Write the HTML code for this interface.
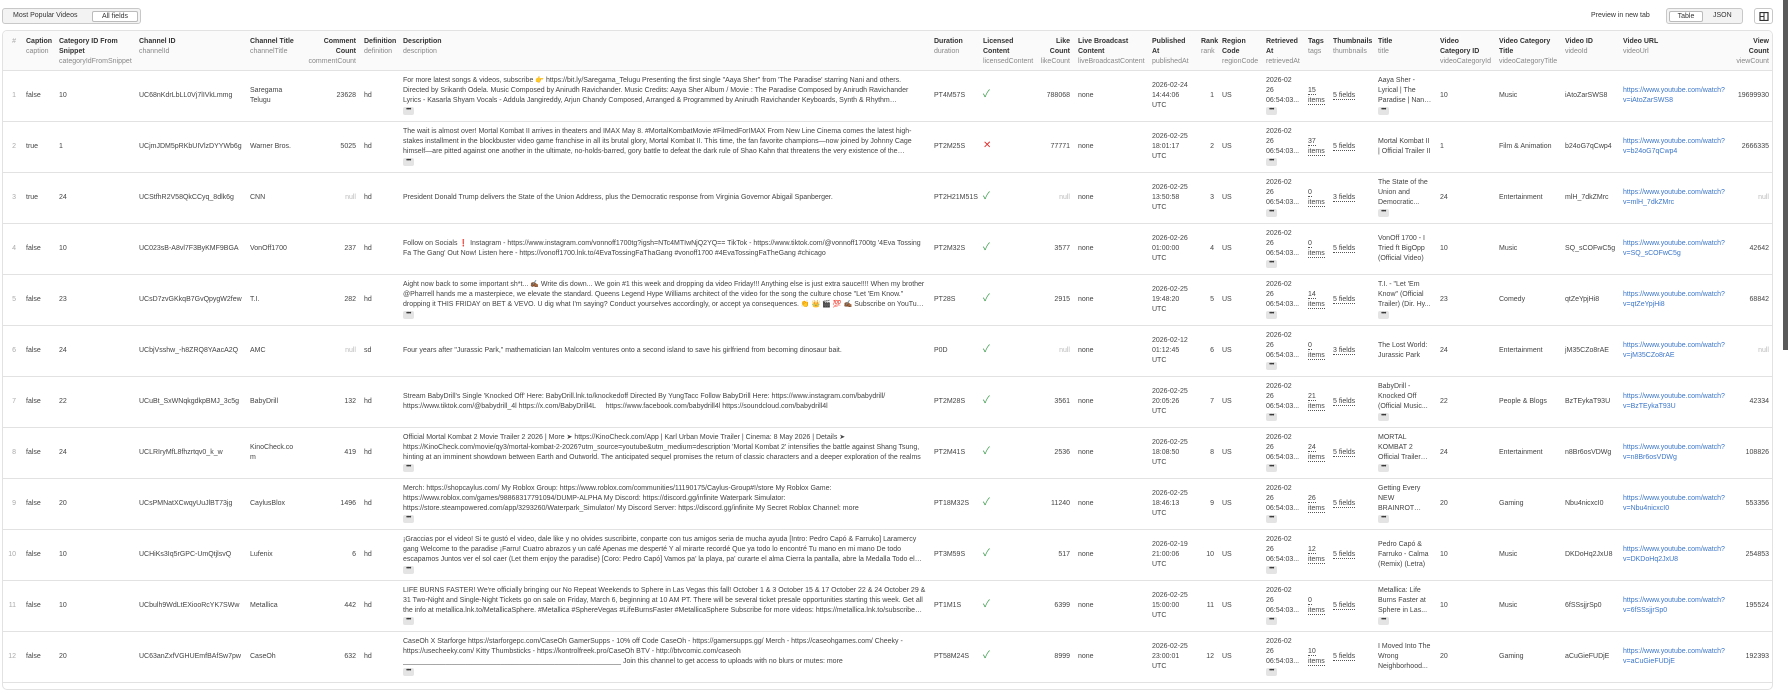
<!DOCTYPE html>
<html><head><meta charset="utf-8">
<style>
*{box-sizing:border-box;margin:0;padding:0}
body{width:1788px;height:680px;overflow:hidden;background:#fff;font-family:"Liberation Sans","Noto Sans CJK SC",sans-serif;font-size:7px;color:#444;position:relative}
.seg{position:absolute;top:8px;height:16px;border:1px solid #c8c8c8;border-radius:3px;background:#f3f3f3}
.seg span{position:absolute;top:3px;color:#333}
.seg .on{top:2px;height:11px;background:#fff;border:1px solid #bbb;border-radius:2px;padding:1px 0 0;text-align:center}
.wrap{position:absolute;left:2px;top:30px;width:1771px;height:660px;border:1px solid #e2e2e2;border-radius:5px;overflow:hidden}
table{border-collapse:collapse;table-layout:fixed;width:1770px}
th{background:#fafafa;height:39px;vertical-align:top;text-align:left;font-weight:bold;color:#333;padding:6px 4px 0;line-height:10px;border-bottom:1px solid #e2e2e2}
th i{display:block;font-style:normal;font-weight:normal;color:#888}
tr{height:51px}
td{height:51px;max-height:51px;border-bottom:1px solid #e2e2e2;padding:0 4px;vertical-align:middle;line-height:10px;overflow:hidden;white-space:normal;word-break:break-word}
td:nth-child(4),td:nth-child(9),td:nth-child(17),td:nth-child(18),td:nth-child(22){white-space:nowrap}
td:nth-child(17),td:nth-child(18){padding:0 2px 0 4px}
.cl{display:-webkit-box;-webkit-line-clamp:3;-webkit-box-orient:vertical;overflow:hidden;max-height:30px}
.r{text-align:right}
.n{color:#aaa}
.g{color:#bbb}
.ch{display:block;width:11px;height:8px;background:#e4e4e4;border-radius:2px;font-size:6px;line-height:7px;text-align:center;color:#333;margin-top:1px;letter-spacing:-0.5px}
.u{border-bottom:1px dotted #555}
a{color:#3b76c9;text-decoration:none}
.ok{color:#3a9a4a;font-size:10px}
.no{color:#d33;font-size:10px}
</style></head><body>
<div class="seg" style="left:2px;width:139px"><span style="left:10px">Most Popular Videos</span><span class="on" style="left:89px;width:46px">All fields</span></div>
<div style="position:absolute;left:1591px;top:12px;color:#333">Preview in new tab</div>
<div class="seg" style="left:1666px;width:77px"><span class="on" style="left:2px;width:34px">Table</span><span style="left:46px">JSON</span></div>
<div class="seg" style="left:1754px;width:19px;background:#fff"><svg style="position:absolute;left:4px;top:3px" width="10" height="9" viewBox="0 0 10 9"><rect x="1" y="0.5" width="8" height="8" fill="none" stroke="#333" stroke-width="1.2"/><line x1="5" y1="0.5" x2="5" y2="8.5" stroke="#333"/><line x1="1" y1="4.5" x2="5" y2="4.5" stroke="#333"/></svg></div>
<div style="position:absolute;left:1783px;top:0;width:5px;height:350px;background:#5a5a5a"></div>
<div class="wrap"><table>
<colgroup><col style="width:19px"><col style="width:33px"><col style="width:80px"><col style="width:111px"><col style="width:55px"><col style="width:59px"><col style="width:39px"><col style="width:531px"><col style="width:49px"><col style="width:54px"><col style="width:41px"><col style="width:74px"><col style="width:49px"><col style="width:21px"><col style="width:44px"><col style="width:42px"><col style="width:25px"><col style="width:45px"><col style="width:62px"><col style="width:59px"><col style="width:66px"><col style="width:58px"><col style="width:112px"><col style="width:42px"></colgroup>
<tr style="height:39px"><th class="r" style="color:#aaa;font-weight:normal;padding-right:6px">#</th><th>Caption<i>caption</i></th><th>Category ID From Snippet<i>categoryIdFromSnippet</i></th><th>Channel ID<i>channelId</i></th><th>Channel Title<i>channelTitle</i></th><th class="r">Comment Count<i>commentCount</i></th><th>Definition<i>definition</i></th><th>Description<i>description</i></th><th>Duration<i>duration</i></th><th>Licensed Content<i>licensedContent</i></th><th class="r">Like Count<i>likeCount</i></th><th>Live Broadcast Content<i>liveBroadcastContent</i></th><th>Published At<i>publishedAt</i></th><th class="r">Rank<i>rank</i></th><th>Region Code<i>regionCode</i></th><th>Retrieved At<i>retrievedAt</i></th><th>Tags<i>tags</i></th><th>Thumbnails<i>thumbnails</i></th><th>Title<i>title</i></th><th>Video Category ID<i>videoCategoryId</i></th><th>Video Category Title<i>videoCategoryTitle</i></th><th>Video ID<i>videoId</i></th><th>Video URL<i>videoUrl</i></th><th class="r">View Count<i>viewCount</i></th></tr>

<tr><td class="r n" style="padding-right:6px">1</td><td>false</td><td>10</td><td>UC68nKdrLbLL0Vj7lIVkLmmg</td><td>Saregama Telugu</td><td class="r">23628</td><td>hd</td><td><div class="cl">For more latest songs &amp; videos, subscribe 👉 https://bit.ly/Saregama_Telugu Presenting the first single "Aaya Sher" from 'The Paradise' starring Nani and others. Directed by Srikanth Odela. Music Composed by Anirudh Ravichander. Music Credits: Aaya Sher Album / Movie : The Paradise Composed by Anirudh Ravichander Lyrics - Kasarla Shyam Vocals - Addula Jangireddy, Arjun Chandy Composed, Arranged &amp; Programmed by Anirudh Ravichander Keyboards, Synth &amp; Rhythm Programmed by Anirudh Ravichander</div><span class="ch">•••</span></td><td>PT4M57S</td><td><span class="ok">✓</span></td><td class="r">788068</td><td>none</td><td>2026-02-24 14:44:06 UTC</td><td class="r">1</td><td>US</td><td>2026-02 26 06:54:03...<span class="ch">•••</span></td><td><span class="u">15</span><br><span class="u">items</span></td><td><span class="u">5 fields</span></td><td><div class="cl">Aaya Sher - Lyrical | The Paradise | Nani ...</div><span class="ch">•••</span></td><td>10</td><td>Music</td><td>iAtoZarSWS8</td><td><a>https://www.youtube.com/watch?v=iAtoZarSWS8</a></td><td class="r">19699930</td></tr>

<tr><td class="r n" style="padding-right:6px">2</td><td>true</td><td>1</td><td>UCjmJDM5pRKbUIVlzDYYWb6g</td><td>Warner Bros.</td><td class="r">5025</td><td>hd</td><td><div class="cl">The wait is almost over! Mortal Kombat II arrives in theaters and IMAX May 8. #MortalKombatMovie #FilmedForIMAX From New Line Cinema comes the latest high-stakes installment in the blockbuster video game franchise in all its brutal glory, Mortal Kombat II. This time, the fan favorite champions—now joined by Johnny Cage himself—are pitted against one another in the ultimate, no-holds-barred, gory battle to defeat the dark rule of Shao Kahn that threatens the very existence of the Earthrealm</div><span class="ch">•••</span></td><td>PT2M25S</td><td><span class="no">✕</span></td><td class="r">77771</td><td>none</td><td>2026-02-25 18:01:17 UTC</td><td class="r">2</td><td>US</td><td>2026-02 26 06:54:03...<span class="ch">•••</span></td><td><span class="u">37</span><br><span class="u">items</span></td><td><span class="u">5 fields</span></td><td>Mortal Kombat II | Official Trailer II</td><td>1</td><td>Film &amp; Animation</td><td>b24oG7qCwp4</td><td><a>https://www.youtube.com/watch?v=b24oG7qCwp4</a></td><td class="r">2666335</td></tr>

<tr><td class="r n" style="padding-right:6px">3</td><td>true</td><td>24</td><td>UCStfhR2V58QkCCyq_8dlk6g</td><td>CNN</td><td class="r g">null</td><td>hd</td><td>President Donald Trump delivers the State of the Union Address, plus the Democratic response from Virginia Governor Abigail Spanberger.</td><td>PT2H21M51S</td><td><span class="ok">✓</span></td><td class="r g">null</td><td>none</td><td>2026-02-25 13:50:58 UTC</td><td class="r">3</td><td>US</td><td>2026-02 26 06:54:03...<span class="ch">•••</span></td><td><span class="u">0</span><br><span class="u">items</span></td><td><span class="u">3 fields</span></td><td><div class="cl">The State of the Union and Democratic...</div><span class="ch">•••</span></td><td>24</td><td>Entertainment</td><td>mlH_7dkZMrc</td><td><a>https://www.youtube.com/watch?v=mlH_7dkZMrc</a></td><td class="r g">null</td></tr>

<tr><td class="r n" style="padding-right:6px">4</td><td>false</td><td>10</td><td>UC023sB-A8vl7F3ByKMF9BGA</td><td>VonOff1700</td><td class="r">237</td><td>hd</td><td><div class="cl">Follow on Socials ❗ Instagram - https://www.instagram.com/vonnoff1700tg?igsh=NTc4MTIwNjQ2YQ== TikTok - https://www.tiktok.com/@vonnoff1700tg '4Eva Tossing Fa The Gang' Out Now! Listen here - https://vonoff1700.lnk.to/4EvaTossingFaThaGang #vonoff1700 #4EvaTossingFaTheGang #chicago</div></td><td>PT2M32S</td><td><span class="ok">✓</span></td><td class="r">3577</td><td>none</td><td>2026-02-26 01:00:00 UTC</td><td class="r">4</td><td>US</td><td>2026-02 26 06:54:03...<span class="ch">•••</span></td><td><span class="u">0</span><br><span class="u">items</span></td><td><span class="u">5 fields</span></td><td>VonOff 1700 - I Tried ft BigOpp (Official Video)</td><td>10</td><td>Music</td><td>SQ_sCOFwC5g</td><td><a>https://www.youtube.com/watch?v=SQ_sCOFwC5g</a></td><td class="r">42642</td></tr>

<tr><td class="r n" style="padding-right:6px">5</td><td>false</td><td>23</td><td>UCsD7zvGKkqB7GvQpygW2few</td><td>T.I.</td><td class="r">282</td><td>hd</td><td><div class="cl">Aight now back to some important sh*t... ✍🏾 Write dis down... We goin #1 this week and dropping da video Friday!!! Anything else is just extra sauce!!!! When my brother @Pharrell hands me a masterpiece, we elevate the standard. Queens Legend Hype Williams architect of the video for the song the culture chose "Let 'Em Know." dropping it THIS FRIDAY on BET &amp; VEVO. U dig what I'm saying? Conduct yourselves accordingly, or accept ya consequences. 👏 👑 🎬 💯 ✍🏾 Subscribe on YouTube - more text here</div><span class="ch">•••</span></td><td>PT28S</td><td><span class="ok">✓</span></td><td class="r">2915</td><td>none</td><td>2026-02-25 19:48:20 UTC</td><td class="r">5</td><td>US</td><td>2026-02 26 06:54:03...<span class="ch">•••</span></td><td><span class="u">14</span><br><span class="u">items</span></td><td><span class="u">5 fields</span></td><td><div class="cl">T.I. - "Let 'Em Know" (Official Trailer) (Dir. Hy...</div><span class="ch">•••</span></td><td>23</td><td>Comedy</td><td>qtZeYpjHi8</td><td><a>https://www.youtube.com/watch?v=qtZeYpjHi8</a></td><td class="r">68842</td></tr>

<tr><td class="r n" style="padding-right:6px">6</td><td>false</td><td>24</td><td>UCbjVsshw_-h8ZRQ8YAacA2Q</td><td>AMC</td><td class="r g">null</td><td>sd</td><td>Four years after "Jurassic Park," mathematician Ian Malcolm ventures onto a second island to save his girlfriend from becoming dinosaur bait.</td><td>P0D</td><td><span class="ok">✓</span></td><td class="r g">null</td><td>none</td><td>2026-02-12 01:12:45 UTC</td><td class="r">6</td><td>US</td><td>2026-02 26 06:54:03...<span class="ch">•••</span></td><td><span class="u">0</span><br><span class="u">items</span></td><td><span class="u">3 fields</span></td><td>The Lost World: Jurassic Park</td><td>24</td><td>Entertainment</td><td>jM35CZo8rAE</td><td><a>https://www.youtube.com/watch?v=jM35CZo8rAE</a></td><td class="r g">null</td></tr>

<tr><td class="r n" style="padding-right:6px">7</td><td>false</td><td>22</td><td>UCuBt_SxWNqkgdkpBMJ_3c5g</td><td>BabyDrill</td><td class="r">132</td><td>hd</td><td><div class="cl">Stream BabyDrill's Single 'Knocked Off' Here: BabyDrill.lnk.to/knockedoff Directed By YungTacc Follow BabyDrill Here: https://www.instagram.com/babydrill/ https://www.tiktok.com/@babydrill_4l https://x.com/BabyDrill4L &nbsp; &nbsp; https://www.facebook.com/babydrill4l https://soundcloud.com/babydrill4l</div></td><td>PT2M28S</td><td><span class="ok">✓</span></td><td class="r">3561</td><td>none</td><td>2026-02-25 20:05:26 UTC</td><td class="r">7</td><td>US</td><td>2026-02 26 06:54:03...<span class="ch">•••</span></td><td><span class="u">21</span><br><span class="u">items</span></td><td><span class="u">5 fields</span></td><td><div class="cl">BabyDrill - Knocked Off (Official Music...</div><span class="ch">•••</span></td><td>22</td><td>People &amp; Blogs</td><td>BzTEykaT93U</td><td><a>https://www.youtube.com/watch?v=BzTEykaT93U</a></td><td class="r">42334</td></tr>

<tr><td class="r n" style="padding-right:6px">8</td><td>false</td><td>24</td><td>UCLRIryMfL8fhzrtqv0_k_w</td><td>KinoCheck.com</td><td class="r">419</td><td>hd</td><td><div class="cl">Official Mortal Kombat 2 Movie Trailer 2 2026 | More ➤ https://KinoCheck.com/App | Karl Urban Movie Trailer | Cinema: 8 May 2026 | Details ➤ https://KinoCheck.com/movie/qy3/mortal-kombat-2-2026?utm_source=youtube&amp;utm_medium=description 'Mortal Kombat 2' intensifies the battle against Shang Tsung, hinting at an imminent showdown between Earth and Outworld. The anticipated sequel promises the return of classic characters and a deeper exploration of the realms</div><span class="ch">•••</span></td><td>PT2M41S</td><td><span class="ok">✓</span></td><td class="r">2536</td><td>none</td><td>2026-02-25 18:08:50 UTC</td><td class="r">8</td><td>US</td><td>2026-02 26 06:54:03...<span class="ch">•••</span></td><td><span class="u">24</span><br><span class="u">items</span></td><td><span class="u">5 fields</span></td><td><div class="cl">MORTAL KOMBAT 2 Official Trailer 2...</div><span class="ch">•••</span></td><td>24</td><td>Entertainment</td><td>n8Br6osVDWg</td><td><a>https://www.youtube.com/watch?v=n8Br6osVDWg</a></td><td class="r">108826</td></tr>

<tr><td class="r n" style="padding-right:6px">9</td><td>false</td><td>20</td><td>UCsPMNatXCwqyUuJlBT73jg</td><td>CaylusBlox</td><td class="r">1496</td><td>hd</td><td><div class="cl">Merch: https://shopcaylus.com/ My Roblox Group: https://www.roblox.com/communities/11190175/Caylus-Group#!/store My Roblox Game: https://www.roblox.com/games/98868317791094/DUMP-ALPHA My Discord: https://discord.gg/infinite Waterpark Simulator: https://store.steampowered.com/app/3293260/Waterpark_Simulator/ My Discord Server: https://discord.gg/infinite My Secret Roblox Channel: more</div><span class="ch">•••</span></td><td>PT18M32S</td><td><span class="ok">✓</span></td><td class="r">11240</td><td>none</td><td>2026-02-25 18:46:13 UTC</td><td class="r">9</td><td>US</td><td>2026-02 26 06:54:03...<span class="ch">•••</span></td><td><span class="u">26</span><br><span class="u">items</span></td><td><span class="u">5 fields</span></td><td><div class="cl">Getting Every NEW BRAINROT From The Luck...</div><span class="ch">•••</span></td><td>20</td><td>Gaming</td><td>Nbu4nicxcI0</td><td><a>https://www.youtube.com/watch?v=Nbu4nicxcI0</a></td><td class="r">553356</td></tr>

<tr><td class="r n" style="padding-right:6px">10</td><td>false</td><td>10</td><td>UCHiKs3Iq5rGPC-UmQtjlsvQ</td><td>Lufenix</td><td class="r">6</td><td>hd</td><td><div class="cl">¡Graccias por el video! Si te gustó el video, dale like y no olvides suscribirte, conparte con tus amigos seria de mucha ayuda [Intro: Pedro Capó &amp; Farruko] Laramercy gang Welcome to the paradise ¡Farru! Cuatro abrazos y un café Apenas me desperté Y al mirarte recordé Que ya todo lo encontré Tu mano en mi mano De todo escapamos Juntos ver el sol caer (Let them enjoy the paradise) [Coro: Pedro Capó] Vamos pa' la playa, pa' curarte el alma Cierra la pantalla, abre la Medalla Todo el mar más</div><span class="ch">•••</span></td><td>PT3M59S</td><td><span class="ok">✓</span></td><td class="r">517</td><td>none</td><td>2026-02-19 21:00:06 UTC</td><td class="r">10</td><td>US</td><td>2026-02 26 06:54:03...<span class="ch">•••</span></td><td><span class="u">12</span><br><span class="u">items</span></td><td><span class="u">5 fields</span></td><td>Pedro Capó &amp; Farruko - Calma (Remix) (Letra)</td><td>10</td><td>Music</td><td>DKDoHq2JxU8</td><td><a>https://www.youtube.com/watch?v=DKDoHq2JxU8</a></td><td class="r">254853</td></tr>

<tr><td class="r n" style="padding-right:6px">11</td><td>false</td><td>10</td><td>UCbulh9WdLtEXiooRcYK7SWw</td><td>Metallica</td><td class="r">442</td><td>hd</td><td><div class="cl">LIFE BURNS FASTER! We're officially bringing our No Repeat Weekends to Sphere in Las Vegas this fall! October 1 &amp; 3 October 15 &amp; 17 October 22 &amp; 24 October 29 &amp; 31 Two-Night and Single-Night Tickets go on sale on Friday, March 6, beginning at 10 AM PT. There will be several ticket presale opportunities starting this week. Get all the info at metallica.lnk.to/MetallicaSphere. #Metallica #SphereVegas #LifeBurnsFaster #MetallicaSphere Subscribe for more videos: https://metallica.lnk.to/subscribe Listen more</div><span class="ch">•••</span></td><td>PT1M1S</td><td><span class="ok">✓</span></td><td class="r">6399</td><td>none</td><td>2026-02-25 15:00:00 UTC</td><td class="r">11</td><td>US</td><td>2026-02 26 06:54:03...<span class="ch">•••</span></td><td><span class="u">0</span><br><span class="u">items</span></td><td><span class="u">5 fields</span></td><td><div class="cl">Metallica: Life Burns Faster at Sphere in Las...</div><span class="ch">•••</span></td><td>10</td><td>Music</td><td>6fSSsjjrSp0</td><td><a>https://www.youtube.com/watch?v=6fSSsjjrSp0</a></td><td class="r">195524</td></tr>

<tr><td class="r n" style="padding-right:6px">12</td><td>false</td><td>20</td><td>UC63anZxfVGHUEmfBAfSw7pw</td><td>CaseOh</td><td class="r">632</td><td>hd</td><td><div class="cl">CaseOh X Starforge https://starforgepc.com/CaseOh GamerSupps - 10% off Code CaseOh - https://gamersupps.gg/ Merch - https://caseohgames.com/ Cheeky - https://usecheeky.com/ Kitty Thumbsticks - https://kontrolfreek.pro/CaseOh BTV - http://btvcomic.com/caseoh ________________________________________________________ Join this channel to get access to uploads with no blurs or mutes: more</div><span class="ch">•••</span></td><td>PT58M24S</td><td><span class="ok">✓</span></td><td class="r">8999</td><td>none</td><td>2026-02-25 23:00:01 UTC</td><td class="r">12</td><td>US</td><td>2026-02 26 06:54:03...<span class="ch">•••</span></td><td><span class="u">10</span><br><span class="u">items</span></td><td><span class="u">5 fields</span></td><td>I Moved Into The Wrong Neighborhood...</td><td>20</td><td>Gaming</td><td>aCuGieFUDjE</td><td><a>https://www.youtube.com/watch?v=aCuGieFUDjE</a></td><td class="r">192393</td></tr>
</table></div>
</body></html>
